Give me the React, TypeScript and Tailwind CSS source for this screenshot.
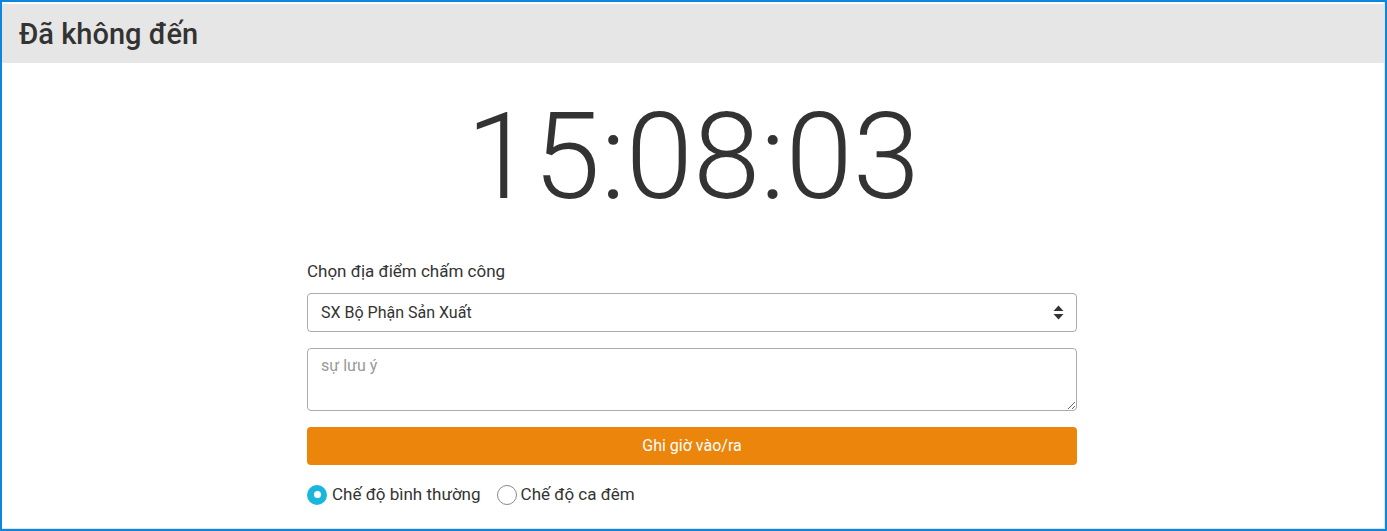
import React from "react";

export default function App() {
  return (
    <div
      className="w-full h-[531px] border-2 border-[#0c86de] bg-white overflow-hidden"
      style={{ fontFamily: "Roboto, 'Noto Sans', sans-serif" }}
    >
      <div className="h-full pt-[2px] border-r border-b border-[#e4e4e4] flex flex-col">
        <div className="h-[59px] bg-[#e6e6e6] flex items-center pl-[17px]">
          <h1 className="text-[29px] font-medium text-[#333333] leading-none mt-[2px]">Đã không đến</h1>
        </div>
        <div className="flex justify-center mt-[34px]">
          <div className="text-[121px] font-light text-[#333333] leading-none">15:08:03</div>
        </div>
        <div className="w-[770px] mx-auto mt-[41px] flex flex-col -translate-x-px">
          <label className="text-[17px] text-[#333333] leading-6">Chọn địa điểm chấm công</label>
          <div className="relative mt-[10px]">
            <select
              className="appearance-none w-full h-[39px] border border-[#ababab] rounded-[4px] pl-[13px] pr-8 text-[16px] text-[#333333] bg-white outline-none"
              style={{ fontFamily: "Roboto, sans-serif" }}
              defaultValue="sx"
            >
              <option value="sx">SX Bộ Phận Sản Xuất</option>
            </select>
            <svg
              className="absolute right-[13px] top-[12px] pointer-events-none"
              width="11"
              height="15"
              viewBox="0 0 11 15"
            >
              <path d="M5.5 0.5 L10.5 6 L0.5 6 Z" fill="#333333" />
              <path d="M5.5 14.5 L10.5 9 L0.5 9 Z" fill="#333333" />
            </svg>
          </div>
          <textarea
            placeholder="sự lưu ý"
            className="mt-[16px] w-full h-[63px] border border-[#ababab] rounded-[4px] px-[13px] py-[5px] text-[16px] text-[#333333] placeholder:text-[#999999] outline-none block"
            style={{ fontFamily: "Roboto, sans-serif" }}
          />
          <button className="mt-[16px] w-full h-[38px] bg-[#eb850b] rounded-[4px] text-white text-[16px] font-normal">
            Ghi giờ vào/ra
          </button>
          <div className="flex items-center mt-[17px] text-[17px] text-[#333333]">
            <span className="w-[20px] h-[20px] rounded-full bg-[#1cb6dc] flex items-center justify-center">
              <span className="w-[7px] h-[7px] rounded-full bg-white" />
            </span>
            <span className="ml-[5px]">Chế độ bình thường</span>
            <span className="ml-[16px] w-[20px] h-[20px] rounded-full border border-[#8a8a8a] bg-white" />
            <span className="ml-[4px]">Chế độ ca đêm</span>
          </div>
        </div>
      </div>
    </div>
  );
}
